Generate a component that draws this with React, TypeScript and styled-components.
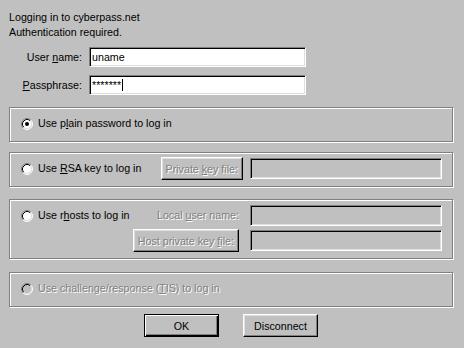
import React from 'react';
import styled, { createGlobalStyle } from 'styled-components';

const GlobalStyle = createGlobalStyle`
  html, body {
    margin: 0;
    padding: 0;
    background: #c0c0c0;
  }
  * {
    box-sizing: border-box;
  }
`;

const FONT = `"Liberation Sans", Arial, sans-serif`;

const Dialog = styled.div`
  width: 464px;
  height: 348px;
  padding: 10px 11px 0 9px;
  background: #c0c0c0;
  color: #000;
  font: 10.7px/15px ${FONT};
  display: flex;
  flex-direction: column;
`;

const Intro = styled.div`
  line-height: 15px;
`;

const LoginForm = styled.div`
  display: grid;
  grid-template-columns: 73px 217px;
  grid-auto-rows: 20px;
  column-gap: 7px;
  row-gap: 8px;
  align-items: center;
  margin-top: 7px;
`;

const Label = styled.span<{ $disabled?: boolean }>`
  text-align: right;
  white-space: nowrap;
  color: ${(p) => (p.$disabled ? '#808080' : '#000')};
  text-shadow: ${(p) => (p.$disabled ? '1px 1px #fff' : 'none')};
`;

const Key = styled.span`
  text-decoration: underline;
`;

const Field = styled.div`
  height: 20px;
  padding: 0 2px;
  border: 1px solid;
  border-color: #808080 #fff #fff #808080;
  box-shadow: inset 1px 1px #000, inset -1px -1px #dfdfdf;
  background: #fff;
  display: flex;
  align-items: center;
  white-space: nowrap;
`;

const FileField = styled(Field)`
  height: 21px;
  background: #c0c0c0;
`;

const Caret = styled.span`
  display: inline-block;
  width: 1px;
  height: 12px;
  margin-left: 1px;
  background: #000;
`;

const GroupBox = styled.div<{ $top: number; $gap?: number }>`
  margin-top: ${(p) => p.$top}px;
  border: 1px solid #808080;
  box-shadow: inset 1px 1px #fff, 1px 1px #fff;
  padding: 4px 10px 6px 11px;
  display: grid;
  grid-template-columns: minmax(0, 1fr) auto 192px;
  grid-auto-rows: 23px;
  column-gap: ${(p) => p.$gap ?? 7}px;
  row-gap: 2px;
  align-items: center;
`;

const Option = styled.label<{ $disabled?: boolean }>`
  display: flex;
  align-items: center;
  gap: 5px;
  white-space: nowrap;
  color: ${(p) => (p.$disabled ? '#808080' : '#000')};
  text-shadow: ${(p) => (p.$disabled ? '1px 1px #fff' : 'none')};
`;

const RadioIcon = styled.svg`
  flex-shrink: 0;
  display: block;
`;

const PushButton = styled.button<{ $width?: number; $default?: boolean }>`
  font: 10.7px ${FONT};
  height: 23px;
  width: ${(p) => (p.$width ? `${p.$width}px` : 'auto')};
  padding: 0 4px;
  margin: 0;
  background: #c0c0c0;
  color: #000;
  white-space: nowrap;
  border: 1px solid;
  border-color: ${(p) => (p.$default ? '#000' : '#fff #000 #000 #fff')};
  box-shadow: ${(p) =>
    p.$default
      ? 'inset 1px 1px #fff, inset -1px -1px #000, inset -2px -2px #808080'
      : 'inset -1px -1px #808080, inset 1px 1px #dfdfdf'};
  &:disabled {
    color: #808080;
    text-shadow: 1px 1px #fff;
  }
`;

const ButtonRow = styled.div`
  display: flex;
  justify-content: center;
  gap: 24px;
  margin-top: 7px;
`;

const Radio = ({ checked, disabled }: { checked?: boolean; disabled?: boolean }) => (
  <RadioIcon width="12" height="12" viewBox="0 0 12 12">
    <circle cx="6" cy="6" r="5" fill={disabled ? '#c0c0c0' : '#fff'} />
    <path d="M2.11 9.89 A5.5 5.5 0 0 1 9.89 2.11" fill="none" stroke="#808080" />
    <path d="M9.89 2.11 A5.5 5.5 0 0 1 2.11 9.89" fill="none" stroke="#fff" />
    <path d="M2.82 9.18 A4.5 4.5 0 0 1 9.18 2.82" fill="none" stroke="#000" />
    <path d="M9.18 2.82 A4.5 4.5 0 0 1 2.82 9.18" fill="none" stroke="#dfdfdf" />
    {checked && <circle cx="6" cy="6" r="2" fill="#000" />}
  </RadioIcon>
);

export default function App() {
  return (
    <>
      <GlobalStyle />
      <Dialog>
        <Intro>
          Logging in to cyberpass.net
          <br />
          Authentication required.
        </Intro>

        <LoginForm>
          <Label>
            User <Key>n</Key>ame:
          </Label>
          <Field>uname</Field>
          <Label>
            <Key>P</Key>assphrase:
          </Label>
          <Field>
            *******
            <Caret />
          </Field>
        </LoginForm>

        <GroupBox $top={12}>
          <Option>
            <Radio checked />
            <span>
              Use p<Key>l</Key>ain password to log in
            </span>
          </Option>
        </GroupBox>

        <GroupBox $top={10}>
          <Option>
            <Radio />
            <span>
              Use <Key>R</Key>SA key to log in
            </span>
          </Option>
          <PushButton disabled>
            Private <Key>k</Key>ey file:
          </PushButton>
          <FileField />
        </GroupBox>

        <GroupBox $top={12} $gap={11}>
          <Option>
            <Radio />
            <span>
              Use r<Key>h</Key>osts to log in
            </span>
          </Option>
          <Label $disabled>
            Local <Key>u</Key>ser name:
          </Label>
          <FileField />
          <span />
          <PushButton disabled>
            Host private key <Key>f</Key>ile:
          </PushButton>
          <FileField />
        </GroupBox>

        <GroupBox $top={13}>
          <Option $disabled>
            <Radio disabled />
            <span>
              Use challenge/response (<Key>T</Key>IS) to log in
            </span>
          </Option>
        </GroupBox>

        <ButtonRow>
          <PushButton $default $width={75}>
            OK
          </PushButton>
          <PushButton $width={75}>Disconnect</PushButton>
        </ButtonRow>
      </Dialog>
    </>
  );
}
